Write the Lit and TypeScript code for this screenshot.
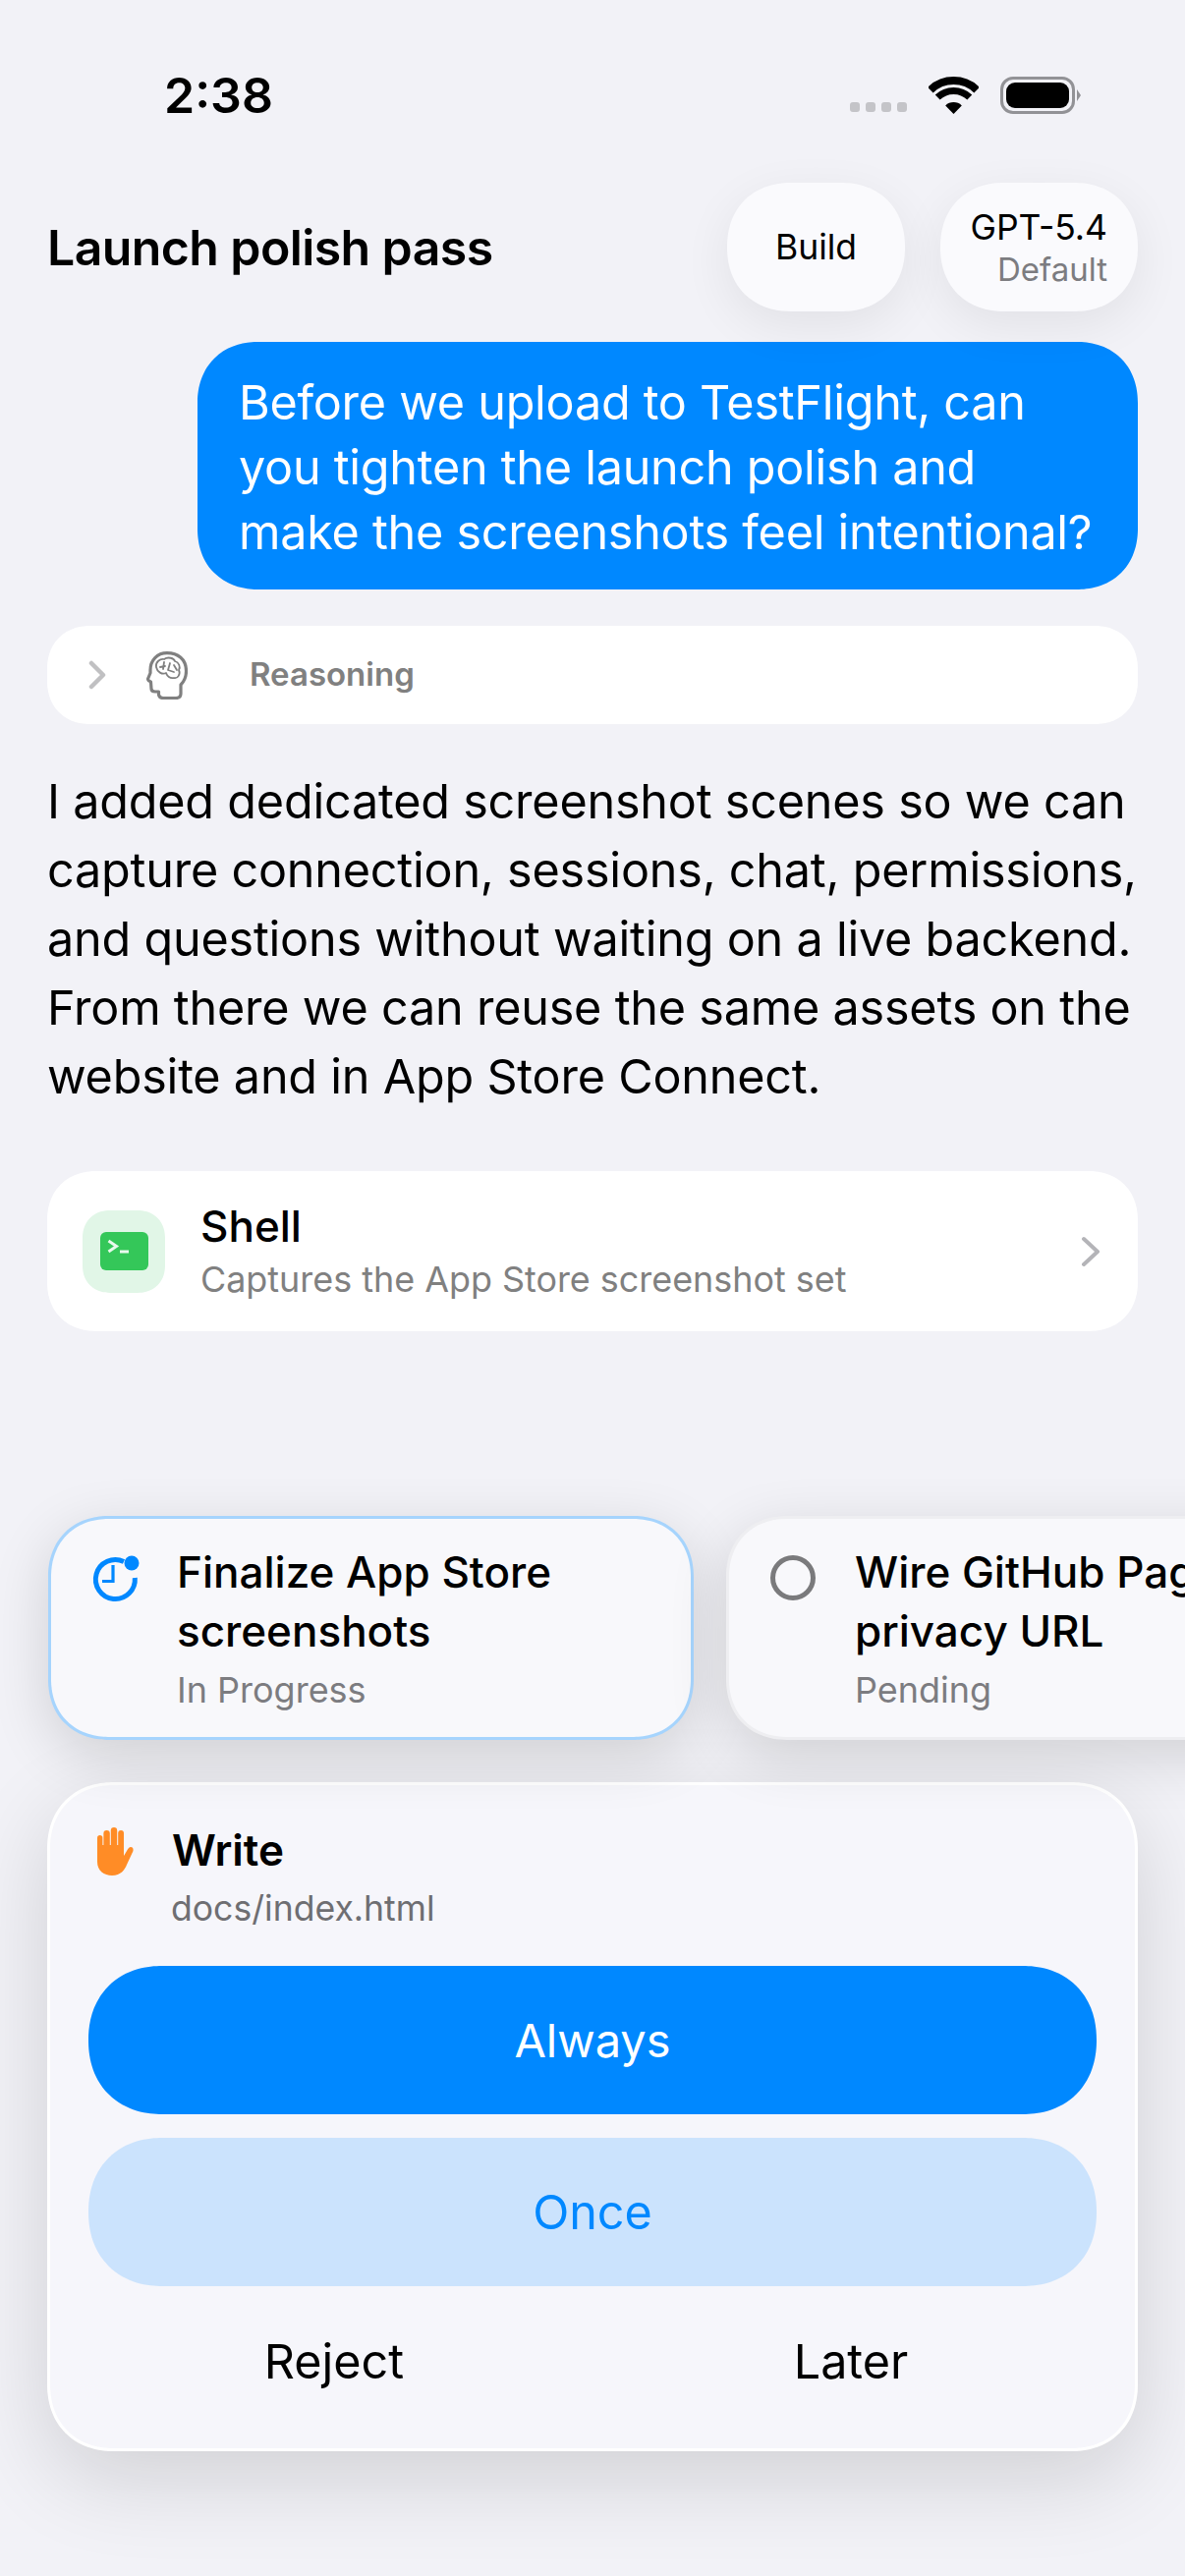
import { LitElement, html, css, svg } from 'lit';
import { customElement } from 'lit/decorators.js';

const tasks = [
  { title: 'Finalize App Store screenshots', status: 'In Progress', active: true },
  { title: 'Wire GitHub Pages privacy URL', status: 'Pending', active: false },
];

const clockIcon = svg`
  <svg class="task-icon clock" width="46" height="46" viewBox="0 0 46 46" fill="none" stroke="#0088ff" stroke-width="5">
    <path d="M32 5.5 A20 20 0 1 0 43.3 22" />
    <path d="M21 9 V25.5 H10" stroke-width="3.2" />
    <circle cx="40" cy="7" r="7.5" fill="#0088ff" stroke="none" />
  </svg>`;

const pendingIcon = svg`
  <svg class="task-icon" width="46" height="46" viewBox="0 0 46 46" fill="none" stroke="#7a7a7c" stroke-width="5">
    <circle cx="23" cy="23" r="20.5" />
  </svg>`;

@customElement('app-root')
export class AppRoot extends LitElement {
  static styles = css`
    :host {
      display: block;
      width: 1206px;
      height: 2622px;
      overflow: hidden;
      background: #f2f2f7;
      color: #000;
      font-family: Inter, 'Liberation Sans', sans-serif;
    }

    .page { display: flow-root; }

    /* iOS continuous corners, where the browser has them */
    .pill, .bubble, .reasoning, .shell, .shell-icon, .task, .permission, .btn {
      corner-shape: superellipse(1.12);
    }

    .status {
      display: flex;
      align-items: center;
      justify-content: space-between;
      height: 62px;
      margin-top: 66px;
      padding: 0 106px 0 167px;
    }
    .time { font-size: 50px; font-weight: 600; line-height: 62px; }
    .status-right { display: flex; align-items: center; }
    .dots { display: flex; gap: 6px; margin: 23px 22px 0 0; }
    .dots i { width: 10px; height: 10px; border-radius: 3px; background: #c4c4c8; }
    .battery {
      box-sizing: border-box;
      width: 76px;
      height: 38px;
      margin-left: 22px;
      padding: 3px;
      border: 3px solid #929296;
      border-radius: 13px;
    }
    .battery i { display: block; height: 100%; border-radius: 9px; background: #000; }
    .nub { width: 0; height: 0; margin-left: 2px; border-left: 4px solid #929296; border-top: 6px solid transparent; border-bottom: 6px solid transparent; }

    .header {
      display: flex;
      align-items: center;
      gap: 36px;
      height: 131px;
      margin-top: 58px;
      padding: 0 48px;
    }
    .title { flex: 1; font-size: 50px; font-weight: 600; letter-spacing: -0.6px; }
    .pill {
      display: flex;
      flex-direction: column;
      align-items: flex-end;
      justify-content: center;
      box-sizing: border-box;
      height: 131px;
      padding: 0 31px;
      border-radius: 65px;
      background: #fafafd;
      box-shadow: 0 14px 50px rgba(0, 0, 0, 0.07);
      font-size: 35.5px;
      white-space: nowrap;
    }
    .pill.build { width: 181px; align-items: center; }
    .pill.model { width: 201px; }
    .pill .main { line-height: 44px; }
    .pill .sub { line-height: 40px; color: #7c7c80; font-size: 33px; }

    .bubble {
      box-sizing: border-box;
      width: 957px;
      height: 252px;
      margin: 31px 48px 0 201px;
      padding: 29px 42px;
      border-radius: 62px;
      background: #0088ff;
      color: #fff;
      font-size: 48.5px;
      letter-spacing: -0.25px;
      line-height: 66px;
      white-space: nowrap;
    }

    .reasoning {
      display: flex;
      align-items: center;
      height: 100px;
      margin: 37px 48px 0;
      padding-left: 42px;
      border-radius: 44px;
      background: #fff;
      color: #808080;
      font-size: 33px;
      font-weight: 600;
    }
    .reasoning .head { margin: 0 63px 0 41px; }
    .reasoning span { position: relative; top: -1px; }

    .body {
      margin: 44px 48px 0;
      font-size: 48.5px;
      letter-spacing: -0.2px;
      line-height: 70px;
      white-space: nowrap;
    }

    .shell {
      display: flex;
      align-items: center;
      height: 163px;
      margin: 61px 48px 0;
      padding: 0 38px 0 36px;
      border-radius: 50px;
      background: #fff;
    }
    .shell-icon {
      display: flex;
      align-items: center;
      justify-content: center;
      width: 84px;
      height: 84px;
      border-radius: 28px;
      background: #e1f6e7;
    }
    .shell-text { flex: 1; margin-left: 36px; padding-top: 3px; }
    .shell-name { font-size: 44px; font-weight: 500; line-height: 54px; }
    .shell-sub { color: #808080; font-size: 35.9px; line-height: 54px; }

    .tasks { display: flex; gap: 33px; margin: 188px 0 0 49px; }
    .task {
      display: flex;
      flex: none;
      gap: 40px;
      box-sizing: border-box;
      width: 657px;
      height: 228px;
      padding: 24px 30px 0 42px;
      border: 3px solid #eeeef1;
      border-radius: 62px;
      background: #f8f8fb;
      box-shadow: 0 16px 60px rgba(0, 0, 0, 0.14);
    }
    .task.active { border-color: #a6d4fd; }
    .task-icon { flex: none; margin-top: 13px; overflow: visible; }
    .task-icon.clock { margin-top: 14px; }
    .task-title { font-size: 44px; font-weight: 500; line-height: 60px; }
    .task-status { margin-top: 8px; color: #7c7c80; font-size: 36px; line-height: 44px; }

    .permission {
      box-sizing: border-box;
      height: 681px;
      margin: 43px 48px 0;
      padding: 36px 39px 0;
      border: 3px solid #fff;
      border-radius: 68px;
      background: #f6f6fb;
      box-shadow: 0 28px 90px rgba(0, 0, 0, 0.14);
    }
    .perm-head { display: flex; gap: 39px; padding-left: 9px; }
    .perm-name { font-size: 44px; font-weight: 600; line-height: 60px; }
    .perm-path { margin-left: -1px; color: #6e6e72; font-size: 35.6px; line-height: 60px; }
    .hand { margin-top: 7px; }
    .btn {
      display: flex;
      align-items: center;
      justify-content: center;
      height: 151px;
      border-radius: 75px;
      font-size: 47px;
    }
    .btn.primary { margin-top: 28px; background: #0088ff; color: #fff; }
    .btn.secondary { margin-top: 24px; background: #cbe3fd; color: #0088ff; font-size: 48.5px; }
    .later-row { display: grid; grid-template-columns: 526px 526px; justify-content: center; height: 152px; font-size: 48.5px; }
    .later-row span { display: flex; align-items: center; justify-content: center; }
  `;

  render() {
    return html`
      <div class="page">
        <div class="status">
          <span class="time">2:38</span>
          <div class="status-right">
            <div class="dots"><i></i><i></i><i></i><i></i></div>
            <svg width="51" height="38" viewBox="0 0 51 38" fill="none" stroke="#000">
              <path d="M1.9 13.6 A34 34 0 0 1 49.1 13.6" stroke-width="8" />
              <path d="M9.2 21.1 A23.5 23.5 0 0 1 41.8 21.1" stroke-width="7" />
              <path d="M25.5 38 L17.2 29.4 A12 12 0 0 1 33.8 29.4 Z" fill="#000" stroke="none" />
            </svg>
            <div class="battery"><i></i></div>
            <div class="nub"></div>
          </div>
        </div>

        <div class="header">
          <div class="title">Launch polish pass</div>
          <div class="pill build"><span class="main">Build</span></div>
          <div class="pill model"><span class="main">GPT-5.4</span><span class="sub">Default</span></div>
        </div>

        <div class="bubble">Before we upload to TestFlight, can<br />you tighten the launch polish and<br />make the screenshots feel intentional?</div>

        <div class="reasoning">
          <svg width="18" height="30" viewBox="0 0 18 30" fill="none" stroke="#c0c0c2" stroke-width="4.5" stroke-linecap="round" stroke-linejoin="round">
            <path d="M3 3 L15 15 L3 27" />
          </svg>
          <svg class="head" width="42" height="49" viewBox="0 0 42 49" fill="none" stroke="#808080" stroke-linejoin="round" stroke-linecap="round">
            <path stroke-width="3.2" d="M35 34 C39 30 40.5 26 40.5 20 C40.5 8 32 1.6 21 1.6 C11 1.6 4 9 4 19 L4 22 L1.5 28 Q1.5 30 4.5 31 L5 38 Q5 41 9 41 L12.5 41 L12.5 44 Q13 47.5 17 47.5 L30 47.5 Q35 47.5 35 43 Z" />
            <path stroke-width="1.8" d="M10 16 C9 11 14 7 18 8 C22 5 28 7 29 10 C33 11 35 16 33 19 C35 23 32 28 28 27 C24 28 21 25 20 22 C16 24 11 21 10 16 Z M14 16 L19 15 M18 11 L17 18 M24 12 L22 19 L28 21 M28 14 L31 19" />
          </svg>
          <span>Reasoning</span>
        </div>

        <div class="body">I added dedicated screenshot scenes so we can<br />capture connection, sessions, chat, permissions,<br />and questions without waiting on a live backend.<br />From there we can reuse the same assets on the<br />website and in App Store Connect.</div>

        <div class="shell">
          <div class="shell-icon">
            <svg width="49" height="39" viewBox="0 0 49 39" fill="none">
              <rect width="49" height="39" rx="6" fill="#34c759" />
              <path d="M8.5 9 L16.5 14.5 L8.5 20" stroke="#e8f9ed" stroke-width="3" />
              <path d="M20 20 H29" stroke="#e8f9ed" stroke-width="3" />
            </svg>
          </div>
          <div class="shell-text">
            <div class="shell-name">Shell</div>
            <div class="shell-sub">Captures the App Store screenshot set</div>
          </div>
          <svg width="20" height="32" viewBox="0 0 20 32" fill="none" stroke="#b4b4b8" stroke-width="4" stroke-linecap="round" stroke-linejoin="round">
            <path d="M3 3 L17 16 L3 29" />
          </svg>
        </div>

        <div class="tasks">
          ${tasks.map(
            (t) => html`
              <div class="task ${t.active ? 'active' : ''}">
                ${t.active ? clockIcon : pendingIcon}
                <div>
                  <div class="task-title">${t.title}</div>
                  <div class="task-status">${t.status}</div>
                </div>
              </div>
            `
          )}
        </div>

        <div class="permission">
          <div class="perm-head">
            <svg class="hand" width="37" height="49" viewBox="0 0 37 49" fill="#ff8c26">
              <rect x="0" y="8" width="5.4" height="20" rx="2.7" />
              <rect x="6.4" y="3" width="6.4" height="25" rx="3.2" />
              <rect x="13.8" y="0" width="6.4" height="28" rx="3.2" />
              <rect x="21.2" y="3" width="5.8" height="25" rx="2.9" />
              <path d="M0 18 L0 35 C0 44 7 49 15 49 C24 49 28 43 30 38 L36.5 24 Q37 20 34 20 Q32 20 30 24 L27 29 L27 18 Z" />
            </svg>
            <div>
              <div class="perm-name">Write</div>
              <div class="perm-path">docs/index.html</div>
            </div>
          </div>
          <div class="btn primary">Always</div>
          <div class="btn secondary">Once</div>
          <div class="later-row"><span>Reject</span><span>Later</span></div>
        </div>
      </div>
    `;
  }
}
